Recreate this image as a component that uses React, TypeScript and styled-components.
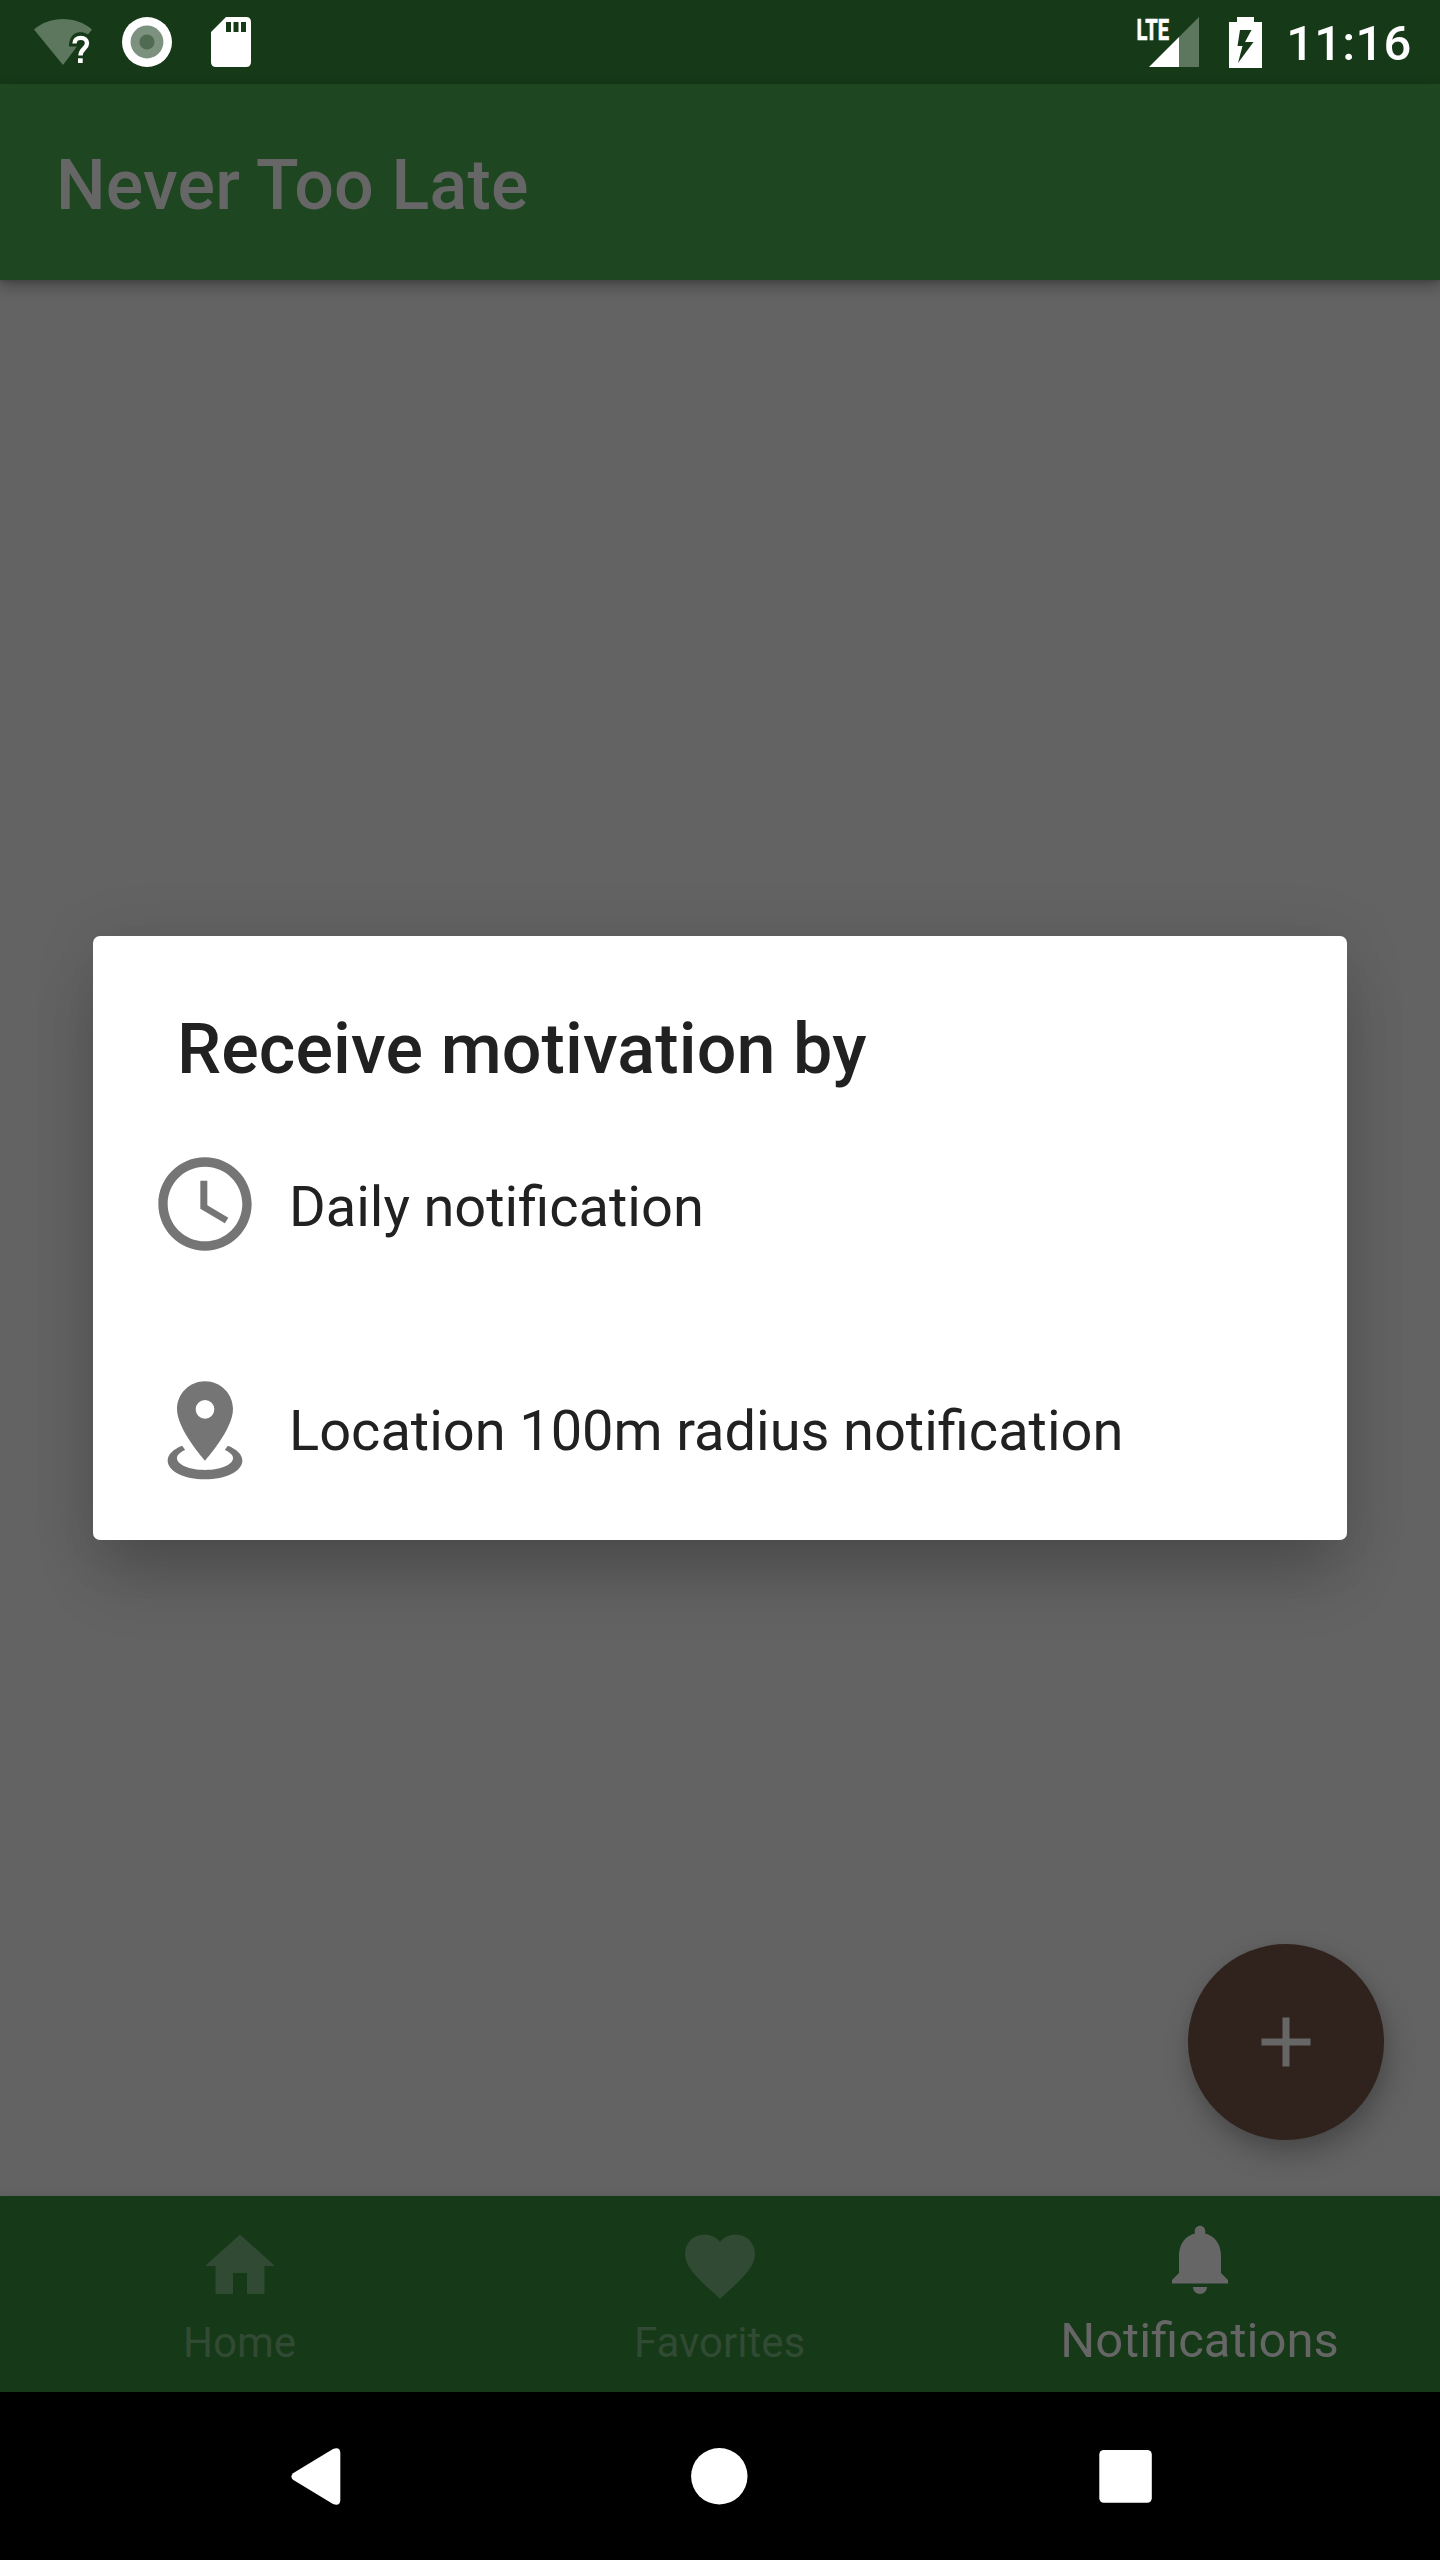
import React from 'react';
import styled, { createGlobalStyle } from 'styled-components';

const GlobalStyle = createGlobalStyle`
  * { box-sizing: border-box; }
  body { margin: 0; background: #000; }
`;

const Screen = styled.div`
  position: relative;
  display: flex;
  flex-direction: column;
  width: 1440px;
  height: 2560px;
  overflow: hidden;
  background: #636363;
  font-family: Roboto, 'Noto Sans', sans-serif;
`;

const StatusBar = styled.header`
  display: flex;
  flex: none;
  justify-content: space-between;
  height: 84px;
  padding: 0 28.5px 0 34px;
  background: #163918;
  color: #fff;
`;

const StatusGroup = styled.div`
  display: flex;
  align-items: center;
  height: 84px;
`;

const StatusIcon = styled.svg<{ $gap: number }>`
  display: block;
  flex: none;
  margin-right: ${(p) => p.$gap}px;
  overflow: visible;
`;

const Clock = styled.span`
  font-size: 49px;
  font-weight: 500;
  letter-spacing: 0.2px;
  line-height: 58px;
  padding-top: 3px;
`;

const AppBar = styled.div`
  display: flex;
  flex: none;
  align-items: center;
  height: 196px;
  padding-left: 56px;
  background: #1e4620;
  box-shadow: 0 6px 14px rgba(0, 0, 0, 0.3), 0 2px 4px rgba(0, 0, 0, 0.12);
`;

const AppTitle = styled.h1`
  margin: 0;
  color: #666;
  font-size: 70px;
  font-weight: 500;
  letter-spacing: 0.18px;
  line-height: 82px;
  padding-top: 6px;
`;

const Body = styled.main`
  display: flex;
  flex: 1;
  align-items: flex-end;
  justify-content: flex-end;
  padding: 56px;
`;

const Fab = styled.button`
  display: flex;
  align-items: center;
  justify-content: center;
  width: 196px;
  height: 196px;
  padding: 0;
  border: 0;
  border-radius: 50%;
  background: #30221d;
  color: #666;
  box-shadow: 4px 14px 28px rgba(0, 0, 0, 0.25), 0 2px 14px rgba(0, 0, 0, 0.05);
`;

const Tabs = styled.nav`
  display: flex;
  flex: none;
  height: 196px;
  background: #163918;
  box-shadow: 0 -1px 8px rgba(0, 0, 0, 0.08);
`;

const Tab = styled.a<{ $active?: boolean }>`
  display: flex;
  flex: 1;
  flex-direction: column;
  align-items: center;
  justify-content: space-between;
  padding: ${(p) => (p.$active ? '21px 0 23px' : '28px 0 24px')};
  color: ${(p) => (p.$active ? '#666' : '#314a33')};
  font-size: ${(p) => (p.$active ? 49 : 42)}px;
  line-height: ${(p) => (p.$active ? 57 : 50)}px;
`;

const TabLabel = styled.span`
  margin-right: 1px;
`;

const SystemBar = styled.footer`
  display: flex;
  flex: none;
  align-items: center;
  justify-content: space-between;
  height: 168px;
  padding: 0 288px 0 290.5px;
  background: #000;
`;

const Glyph = styled.svg`
  display: block;
  flex: none;
`;

const DialogLayer = styled.div`
  position: absolute;
  top: 84px;
  right: 0;
  bottom: 168px;
  left: 0;
  display: flex;
  align-items: center;
  justify-content: center;
`;

const Dialog = styled.section`
  width: 1254px;
  height: 604px;
  padding-top: 72px;
  border-radius: 7px;
  background: #fff;
  color: #212121;
  box-shadow: 0 44px 62px -9px rgba(0, 0, 0, 0.2), 0 4px 64px rgba(0, 0, 0, 0.1);
`;

const DialogTitle = styled.h2`
  margin: 0 0 0 84px;
  font-size: 70px;
  font-weight: 500;
  letter-spacing: 0.13px;
  line-height: 82px;
`;

const Option = styled.div`
  display: flex;
  align-items: center;
  height: 112px;
  margin: 58px 0 112px 56px;
  color: #757575;

  & + & { margin-top: 0; }
`;

const OptionLabel = styled.span`
  margin-left: 28px;
  padding-top: 6px;
  color: #212121;
  font-size: 56px;
  line-height: 66px;
  word-spacing: -0.4px;
`;

const paths = {
  add: 'M19 13h-6v6h-2v-6H5v-2h6V5h2v6h6v2z',
  home: 'M10 20v-6h4v6h5v-8h3L12 3 2 12h3v8z',
  heart:
    'M12 21.35l-1.45-1.32C5.4 15.36 2 12.28 2 8.5 2 5.42 4.42 3 7.5 3c1.74 0 3.41.81 4.5 2.09C13.09 3.81 14.76 3 16.5 3 19.58 3 22 5.42 22 8.5c0 3.78-3.4 6.86-8.55 11.54L12 21.35z',
  bell: 'M12 22c1.1 0 2-.9 2-2h-4c0 1.1.89 2 2 2zm6-6v-5c0-3.07-1.64-5.64-4.5-6.32V4c0-.83-.67-1.5-1.5-1.5s-1.5.67-1.5 1.5v.68C7.63 5.36 6 7.92 6 11v5l-2 2v1h16v-1l-2-2z',
  time: 'M11.99 2C6.47 2 2 6.48 2 12s4.47 10 9.99 10C17.52 22 22 17.52 22 12S17.52 2 11.99 2zM12 20c-4.42 0-8-3.58-8-8s3.58-8 8-8 8 3.58 8 8-3.58 8-8 8zM12.5 7H11v6l5.25 3.15.75-1.23-4.5-2.67z',
  place:
    'M12,2C15.31,2 18,4.66 18,7.95C18,12.41 12,19 12,19C12,19 6,12.41 6,7.95C6,4.66 8.69,2 12,2M12,6A2,2 0 0,0 10,8A2,2 0 0,0 12,10A2,2 0 0,0 14,8A2,2 0 0,0 12,6M20,19C20,21.21 16.42,23 12,23C7.58,23 4,21.21 4,19C4,17.71 5.22,16.56 7.11,15.83L7.75,16.74C6.67,17.19 6,17.81 6,18.5C6,19.88 8.69,21 12,21C15.31,21 18,19.88 18,18.5C18,17.81 17.33,17.19 16.25,16.74L16.89,15.83C18.78,16.56 20,17.71 20,19Z',
};

const Icon = ({ name, size = 84 }: { name: keyof typeof paths; size?: number }) => (
  <Glyph width={size} height={size} viewBox="0 0 24 24" fill="currentColor">
    <path d={paths[name]} />
  </Glyph>
);

const tabs: { icon: keyof typeof paths; label: string; active?: boolean }[] = [
  { icon: 'home', label: 'Home' },
  { icon: 'heart', label: 'Favorites' },
  { icon: 'bell', label: 'Notifications', active: true },
];

const options: { icon: keyof typeof paths; label: string }[] = [
  { icon: 'time', label: 'Daily notification' },
  { icon: 'place', label: 'Location 100m radius notification' },
];

export default function App() {
  return (
    <>
      <GlobalStyle />
      <Screen>
        <StatusBar>
          <StatusGroup>
            <StatusIcon $gap={30} width="58" height="50" viewBox="34 17 58 50">
              <path
                d="M34 29.500C42 22.500 52 19 63 19S84 22.500 92 29.500L88 34.500C85 32.500 82 32 79 32.300C73 33 69 38 69 46.500H77L63 65Z"
                fill="#5c775e"
              />
              <path
                d="M74.500 43.500C74.500 40 77 37.900 80.700 37.900C84.600 37.900 87 40 87 43.200C87 48.500 80.500 49 80.500 55.500"
                fill="none"
                stroke="#fff"
                strokeWidth="4.400"
              />
              <rect x="78" y="58.300" width="4.700" height="4.700" fill="#fff" />
            </StatusIcon>
            <StatusIcon $gap={39} width="50" height="50" viewBox="0 0 50 50">
              <circle cx="25" cy="25" r="25" fill="#fff" />
              <circle cx="25" cy="25" r="16.400" fill="#7c917e" />
              <circle cx="25" cy="25" r="7.600" fill="#506b52" />
            </StatusIcon>
            <StatusIcon $gap={0} width="40" height="50" viewBox="0 0 40 50">
              <path
                d="M15 0H35Q40 0 40 5V45Q40 50 35 50H5Q0 50 0 45V15ZM15 5V15H20V5ZM22.500 5V15H27.500V5ZM30 5V15H35V5Z"
                fill="#fff"
                fillRule="evenodd"
              />
            </StatusIcon>
          </StatusGroup>
          <StatusGroup>
            <StatusIcon $gap={30} width="62" height="50" viewBox="1137 17 62 50">
              <path d="M1179 37L1199 17V67H1179Z" fill="#5c775e" />
              <path d="M1149 67L1179 37V67Z" fill="#fff" />
              <text
                x="1136.500"
                y="39.700"
                fill="#fff"
                stroke="#fff"
                strokeWidth="0.700"
                fontSize="30"
                fontWeight="700"
                textLength="32.500"
                lengthAdjust="spacingAndGlyphs"
              >
                LTE
              </text>
            </StatusIcon>
            <StatusIcon $gap={24} width="33" height="51" viewBox="1229 16 33 51">
              <path
                d="M1237 16H1254V21H1262V67H1229V21H1237ZM1240 29L1237.500 45H1242.500L1238 62L1253.500 41H1245L1251.500 29Z"
                fill="#fff"
                fillRule="evenodd"
              />
            </StatusIcon>
            <Clock>11:16</Clock>
          </StatusGroup>
        </StatusBar>
        <AppBar>
          <AppTitle>Never Too Late</AppTitle>
        </AppBar>
        <Body>
          <Fab aria-label="Add">
            <Icon name="add" />
          </Fab>
        </Body>
        <Tabs>
          {tabs.map((t) => (
            <Tab key={t.label} $active={t.active}>
              <Icon name={t.icon} />
              <TabLabel>{t.label}</TabLabel>
            </Tab>
          ))}
        </Tabs>
        <SystemBar>
          <Glyph width="50" height="57" viewBox="0 0 50 57">
            <path
              d="M2 25.200L42 0.900Q49.300 -1.500 49.300 5V52Q49.300 58.500 42 56.100L2 31.800Q-1.200 28.500 2 25.200Z"
              fill="#fff"
            />
          </Glyph>
          <Glyph width="57" height="57" viewBox="0 0 57 57">
            <circle cx="28.300" cy="28.200" r="28.200" fill="#fff" />
          </Glyph>
          <Glyph width="53" height="54" viewBox="0 0 53 54">
            <rect x="0.300" y="1" width="52.500" height="52.700" rx="4.500" fill="#fff" />
          </Glyph>
        </SystemBar>
        <DialogLayer>
          <Dialog role="dialog">
            <DialogTitle>Receive motivation by</DialogTitle>
            {options.map((o) => (
              <Option key={o.label}>
                <Icon name={o.icon} size={112} />
                <OptionLabel>{o.label}</OptionLabel>
              </Option>
            ))}
          </Dialog>
        </DialogLayer>
      </Screen>
    </>
  );
}
